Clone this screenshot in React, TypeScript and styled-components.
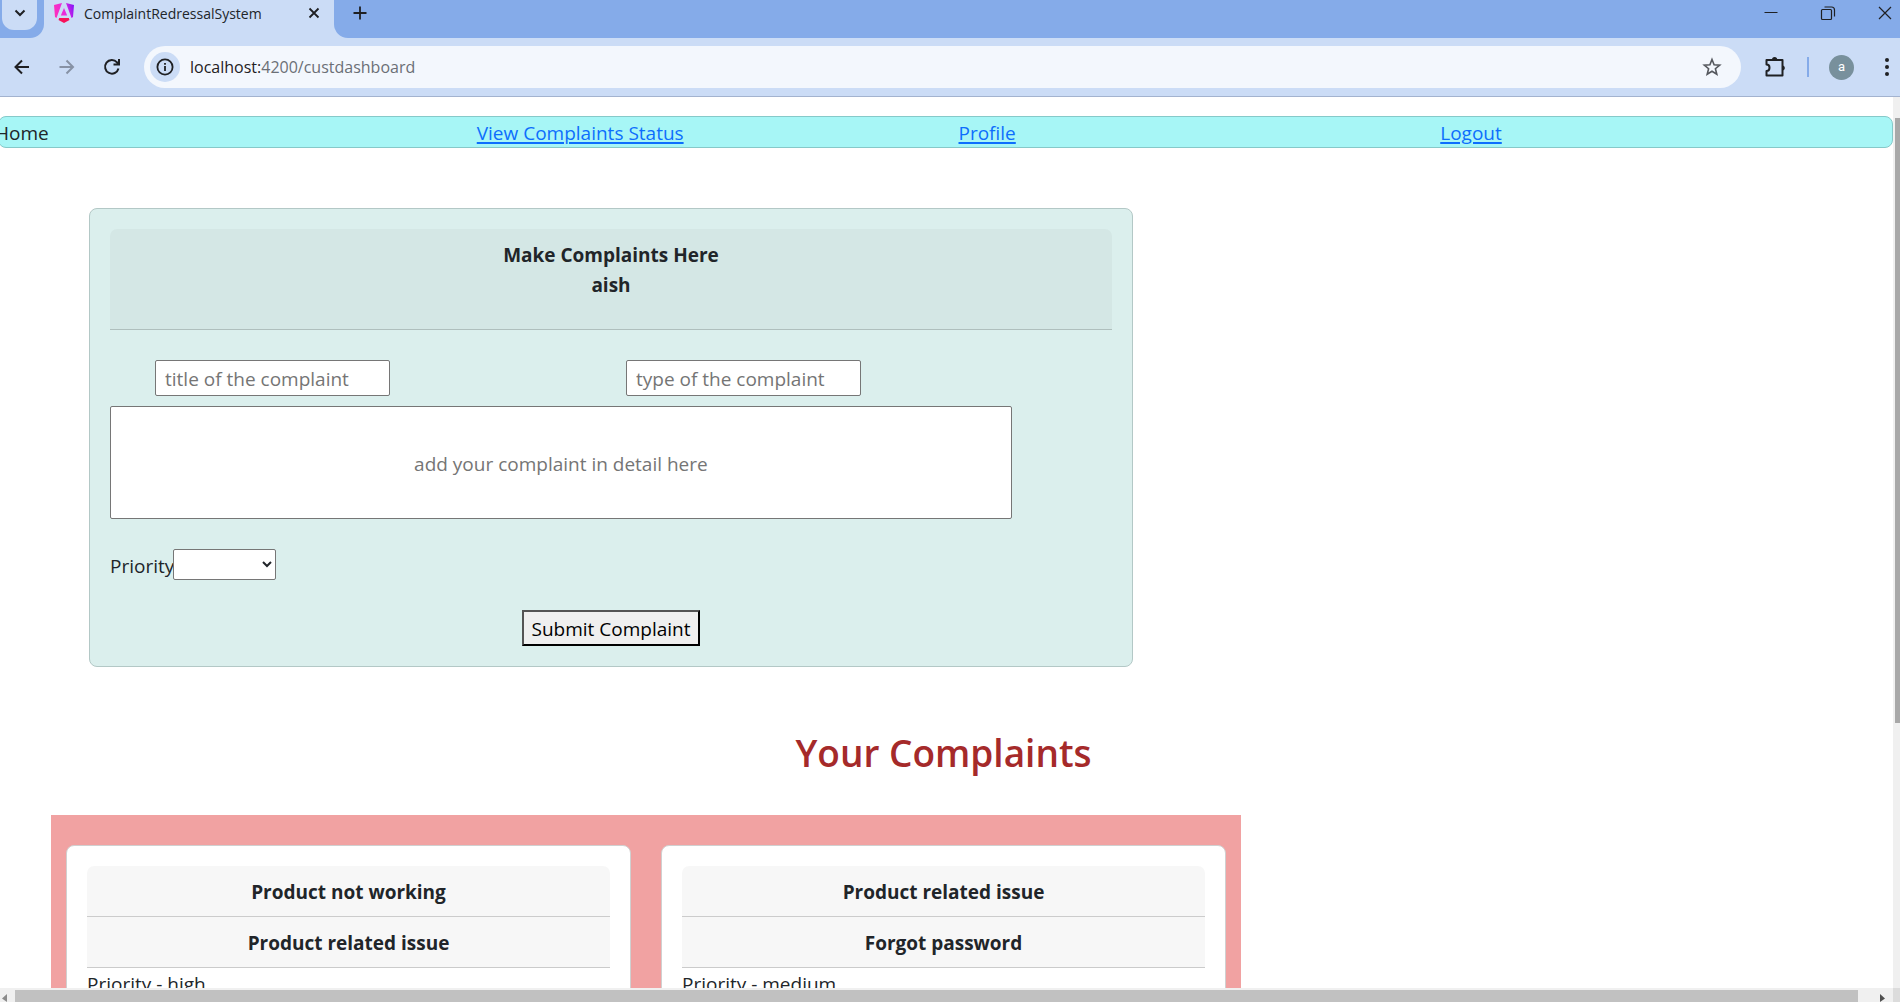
import React from "react";
import styled, { createGlobalStyle } from "styled-components";

const GlobalStyle = createGlobalStyle`
  *, *::before, *::after { box-sizing: border-box; }
  body {
    margin: 0;
    overflow: hidden;
    background: #fff;
    color: #212529;
    font-family: "Open Sans", "Noto Sans", sans-serif;
    font-size: 19px;
    line-height: 30px;
  }
  input, select, button { font: inherit; color: inherit; }
`;

const Window = styled.div`
  display: flex;
  flex-direction: column;
  height: 100vh;
  overflow: hidden;
`;

const TabStrip = styled.header`
  display: flex;
  flex: none;
  height: 38px;
  background: #85abe9;
`;

const ChromeButton = styled.button`
  display: flex;
  align-items: center;
  justify-content: center;
  flex: none;
  width: ${(p: { $width?: number }) => p.$width ?? 34}px;
  height: 34px;
  padding: 0;
  border: 0;
  background: none;
  color: #1f2023;
`;

const TabSearchSlot = styled.div`
  flex: none;
  width: 44px;
  padding-left: 2px;
  background: #85abe9;
  border-radius: 0 0 14px 0;
`;

const TabSearchButton = styled(ChromeButton)`
  width: 35px;
  height: 30px;
  padding-bottom: 4px;
  border-radius: 0 0 12px 12px;
  background: #cbdcf6;
`;

const TabBackdrop = styled.div`
  display: flex;
  flex: none;
  background: #cbdcf6;
`;

const Tab = styled.div`
  display: flex;
  align-items: center;
  flex: none;
  width: 290px;
  padding: 0 10px 12px;
  background: #cbdcf6;
  font-size: 14px;
  line-height: 20px;
`;

const TabTitle = styled.span`
  flex: 1;
  padding: 2px 0 0 10px;
`;

const StripRest = styled.div`
  display: flex;
  align-items: center;
  flex: 1;
  padding-bottom: 12px;
  padding-left: 9px;
  background: #85abe9;
  border-radius: 0 0 0 14px;
`;

const TabTail = styled.div`
  display: flex;
  flex: 1;
  background: #cbdcf6;
`;

const WindowControls = styled.div`
  display: flex;
  align-items: center;
  gap: 23px;
  margin-left: auto;
  margin-right: -2px;
`;

const Toolbar = styled.div`
  display: flex;
  align-items: center;
  flex: none;
  height: 59px;
  padding-left: 5px;
  background: #cbdcf6;
  border-bottom: 1px solid #a3b3cf;
`;

const NavButtons = styled.div`
  display: flex;
  gap: 11px;
  width: 139px;
`;

const AddressBar = styled.div`
  display: flex;
  align-items: center;
  flex: 1;
  height: 42px;
  padding: 0 12px 0 6px;
  border-radius: 21px;
  background: #f3f7fd;
`;

const SiteInfo = styled(ChromeButton)`
  width: 30px;
  height: 30px;
  border-radius: 50%;
  background: #cbdcf6;
`;

const AddressText = styled.span`
  flex: 1;
  padding-left: 10px;
  font-size: 16px;
  line-height: 24px;
  color: #6b6f76;
`;

const Host = styled.span`
  color: #1f2023;
`;

const ToolbarActions = styled.div`
  display: flex;
  align-items: center;
  width: 159px;
  padding-left: 17px;
`;

const Divider = styled.span`
  width: 2px;
  height: 20px;
  margin: 0 20px 0 15px;
  background: #85abe9;
`;

const Avatar = styled.button`
  flex: none;
  width: 25px;
  height: 25px;
  padding: 0;
  border: 0;
  border-radius: 50%;
  background: #78909c;
  color: #fff;
  font-family: Roboto, sans-serif;
  font-size: 13px;
  line-height: 24px;
`;

const MenuButton = styled(ChromeButton)`
  width: 26px;
  margin-left: auto;
`;

const Viewport = styled.div`
  display: grid;
  flex: 1;
  min-height: 0;
  grid-template: minmax(0, 1fr) 14px / minmax(0, 1fr) 7px;
`;

const Page = styled.div`
  overflow: hidden;
  padding-top: 19px;
`;

const NavCard = styled.nav`
  margin-left: -2px;
  border: 1px solid #86c9c9;
  border-radius: 8px;
  background: #a7f6f6;
`;

const NavRow = styled.div`
  display: grid;
  grid-template-columns: repeat(4, 1fr);
  margin: 0 -30px 0 -4px;
  padding-top: 2px;
  line-height: 28px;
`;

const NavLink = styled.a`
  color: #0d6efd;
  text-decoration: underline;
  text-decoration-thickness: 2px;
  text-underline-offset: 2px;
`;

const Card = styled.section`
  padding: 20px;
  border: 1px solid ${(p: { $tinted?: boolean }) => (p.$tinted ? "#b3c8c6" : "#d0d0d0")};
  border-radius: 8px;
  background: ${(p: { $tinted?: boolean }) => (p.$tinted ? "#dbefed" : "#fff")};
`;

const FormCard = styled(Card)`
  max-width: 1044px;
  margin: 60px 0 0 89px;
`;

const CardHeader = styled.div`
  padding: 11px 20px 9px;
  border-bottom: 1px solid rgba(0, 0, 0, 0.176);
  background: rgba(0, 0, 0, 0.03);
  font-weight: 700;
  text-align: center;
  &:first-child { border-radius: 7px 7px 0 0; }
`;

const FormHeader = styled(CardHeader)`
  padding-bottom: 29px;
  p { margin: 0; }
`;

const CardText = styled.p`
  margin: 0;
  padding-top: 1px;
`;

const FieldRow = styled.div`
  display: grid;
  grid-template-columns: 471px 1fr;
  margin-top: 30px;
  padding-left: 45px;
`;

const TextField = styled.input`
  width: ${(p: { $wide?: boolean }) => (p.$wide ? "90%" : "235px")};
  height: ${(p: { $wide?: boolean }) => (p.$wide ? 113 : 36)}px;
  padding: 3px 9px 1px;
  border: 1px solid #767676;
  border-radius: 2px;
  background: #fff;
  text-align: ${(p: { $wide?: boolean }) => (p.$wide ? "center" : "left")};
  &::placeholder { color: #757575; opacity: 1; }
`;

const DetailRow = styled.div`
  display: flex;
  margin-top: 10px;
`;

const PriorityRow = styled.div`
  display: flex;
  align-items: center;
  margin-top: 30px;
`;

const PriorityLabel = styled.label`
  flex: none;
  width: 63px;
  padding-top: 2px;
  line-height: 28px;
`;

const PrioritySelect = styled.select`
  width: 103px;
  height: 31px;
  border: 1px solid #767676;
  border-radius: 2px;
  background: #fff;
`;

const SubmitRow = styled.div`
  display: flex;
  justify-content: center;
  margin-top: 30px;
`;

const SubmitButton = styled.button`
  height: 36px;
  padding: 2px 8px 0;
  border: 2px outset #000;
  background: #efefef;
  color: #000;
`;

const Heading = styled.h1`
  margin: 60px 6px 37px 0;
  color: #a52a2a;
  font-size: 37px;
  font-weight: 600;
  line-height: 51px;
  text-align: center;
`;

const ComplaintPanel = styled.div`
  display: grid;
  grid-template-columns: 1fr 1fr;
  gap: 30px;
  max-width: 1190px;
  margin-left: 51px;
  padding: 30px 15px;
  background: #f1a2a2;
`;

const Track = styled.div`
  display: flex;
  flex-direction: ${(p: { $vertical?: boolean }) => (p.$vertical ? "column" : "row")};
  align-items: stretch;
  padding: ${(p: { $vertical?: boolean }) => (p.$vertical ? "21px 0 0 2px" : "2px 0 0 0")};
  background: #f0f0f0;
`;

const Thumb = styled.div`
  flex: ${(p: { $vertical?: boolean }) => (p.$vertical ? "0 0 69.5%" : "1")};
  background: ${(p: { $vertical?: boolean }) => (p.$vertical ? "#a8a8a8" : "#c1c1c1")};
`;

const ArrowSlot = styled.div`
  flex: none;
  width: ${(p: { $width: number }) => p.$width}px;
  svg { display: block; }
`;

const Corner = styled.div`
  background: #dcdcdc;
`;

const complaints = [
  { title: "Product not working", type: "Product related issue", priority: "high" },
  { title: "Product related issue", type: "Forgot password", priority: "medium" },
];

function Icon({ d, size = 20, width = 2, color = "currentColor" }: { d: string; size?: number; width?: number; color?: string }) {
  return (
    <svg width={size} height={size} viewBox="0 0 20 20" fill="none" stroke={color} strokeWidth={width} aria-hidden="true">
      <path d={d} />
    </svg>
  );
}

function AngularLogo() {
  return (
    <svg width="20" height="20" viewBox="0 0 20 20" aria-hidden="true">
      <defs>
        <linearGradient id="shield" x1="0" y1="0.2" x2="1" y2="0">
          <stop offset="0" stopColor="#fb2fc0" />
          <stop offset="0.5" stopColor="#e52ae0" />
          <stop offset="1" stopColor="#7a12fa" />
        </linearGradient>
      </defs>
      <path fill="url(#shield)" d="M8 0 0 2l1 12 1.500 1L8 0Zm4 0 8 2-1 12-1.500 1L12 0ZM10 5l3.200 7.500H6.800L10 5Z" />
      <path fill="#f8115a" d="M5.200 15h9.600l.7 2L10 20l-5.500-3 .7-2Z" />
    </svg>
  );
}

function BrowserChrome() {
  return (
    <>
      <TabStrip>
        <TabBackdrop>
          <TabSearchSlot>
            <TabSearchButton aria-label="Search tabs"><Icon d="m5.500 7.500 4.500 4.500 4.500-4.500" /></TabSearchButton>
          </TabSearchSlot>
        </TabBackdrop>
        <Tab>
          <AngularLogo />
          <TabTitle>ComplaintRedressalSystem</TabTitle>
          <ChromeButton $width={20} aria-label="Close tab"><Icon d="m5.500 5.500 9 9m0-9-9 9" width={1.8} /></ChromeButton>
        </Tab>
        <TabTail>
          <StripRest>
            <ChromeButton aria-label="New tab"><Icon d="M10 3.500v13M3.500 10h13" width={1.8} /></ChromeButton>
            <WindowControls>
              <ChromeButton aria-label="Minimize"><Icon d="M3.500 9.500h13" width={1} /></ChromeButton>
              <ChromeButton aria-label="Restore"><Icon d="M3.500 7.500q0-1 1-1h8q1 0 1 1v8q0 1-1 1h-8q-1 0-1-1ZM6.500 4h7q3 0 3 3v6.500" width={1.2} /></ChromeButton>
              <ChromeButton aria-label="Close"><Icon d="m4 4 12 12m0-12L4 16" width={1.2} /></ChromeButton>
            </WindowControls>
          </StripRest>
        </TabTail>
      </TabStrip>
      <Toolbar>
        <NavButtons>
          <ChromeButton aria-label="Back"><Icon d="M17 10H3.500m6.500-6.500L3.500 10l6.500 6.500" /></ChromeButton>
          <ChromeButton aria-label="Forward"><Icon d="M2.500 10H16M9.500 3.500 16 10l-6.500 6.500" color="#8792a5" /></ChromeButton>
          <ChromeButton aria-label="Reload"><Icon d="M16.500 11.500A6.800 6.800 0 1 1 15 5.300l2 2M17 2v5.500h-5.500" /></ChromeButton>
        </NavButtons>
        <AddressBar>
          <SiteInfo aria-label="Site information">
            <svg width="20" height="20" viewBox="0 0 20 20" fill="none" stroke="currentColor" strokeWidth="1.800" aria-hidden="true">
              <circle cx="10" cy="10" r="7.600" />
              <path d="M10 9v5M10 6v1.800" />
            </svg>
          </SiteInfo>
          <AddressText><Host>localhost:</Host>4200/custdashboard</AddressText>
          <ChromeButton aria-label="Bookmark this page">
            <Icon d="m10 2.500 2.100 5.200 5.600.4-4.300 3.600 1.400 5.500-4.800-3-4.800 3 1.400-5.500-4.300-3.600 5.600-.4Z" width={1.6} color="#55585e" />
          </ChromeButton>
        </AddressBar>
        <ToolbarActions>
          <ChromeButton aria-label="Extensions">
            <svg width="22" height="22" viewBox="0 0 22 22" fill="none" stroke="currentColor" strokeWidth="2" aria-hidden="true">
              <path d="M2.500 4h16v15.500h-16V15q3 0 3-3.200t-3-3.200Z" strokeLinejoin="round" />
              <path d="M8 3.500a2.600 2.600 0 0 1 5.200 0Zm11 6a2.600 2.600 0 0 1 0 5Z" fill="currentColor" stroke="none" />
            </svg>
          </ChromeButton>
          <Divider />
          <Avatar aria-label="Profile a">a</Avatar>
          <MenuButton aria-label="Browser menu">
            <svg width="6" height="20" viewBox="0 0 6 20" fill="currentColor" aria-hidden="true">
              <circle cx="3" cy="3" r="2" /><circle cx="3" cy="10" r="2" /><circle cx="3" cy="17" r="2" />
            </svg>
          </MenuButton>
        </ToolbarActions>
      </Toolbar>
    </>
  );
}

function ComplaintForm() {
  return (
    <FormCard $tinted>
      <FormHeader>
        <p>Make Complaints Here</p>
        <p>aish</p>
      </FormHeader>
      <form onSubmit={(e) => e.preventDefault()}>
        <FieldRow>
          <TextField aria-label="Title" placeholder="title of the complaint" />
          <TextField aria-label="Type" placeholder="type of the complaint" />
        </FieldRow>
        <DetailRow>
          <TextField $wide aria-label="Detail" placeholder="add your complaint in detail here" />
        </DetailRow>
        <PriorityRow>
          <PriorityLabel htmlFor="priority">Priority</PriorityLabel>
          <PrioritySelect id="priority" defaultValue="">
            <option value=""></option>
            <option value="high">high</option>
            <option value="medium">medium</option>
          </PrioritySelect>
        </PriorityRow>
        <SubmitRow>
          <SubmitButton type="submit">Submit Complaint</SubmitButton>
        </SubmitRow>
      </form>
    </FormCard>
  );
}

export default function App() {
  return (
    <Window>
      <GlobalStyle />
      <BrowserChrome />
      <Viewport>
        <Page>
          <NavCard>
            <NavRow>
              <span>Home</span>
              <span><NavLink href="#status">View Complaints Status</NavLink></span>
              <span><NavLink href="#profile">Profile</NavLink></span>
              <span><NavLink href="#logout">Logout</NavLink></span>
            </NavRow>
          </NavCard>
          <ComplaintForm />
          <Heading>Your Complaints</Heading>
          <ComplaintPanel>
            {complaints.map((c) => (
              <Card key={c.title}>
                <CardHeader>{c.title}</CardHeader>
                <CardHeader>{c.type}</CardHeader>
                <CardText>Priority - {c.priority}</CardText>
              </Card>
            ))}
          </ComplaintPanel>
        </Page>
        <Track $vertical><Thumb $vertical /></Track>
        <Track>
          <ArrowSlot $width={15}>
            <svg width="15" height="12" viewBox="0 0 15 12" fill="#8b8b8b" aria-hidden="true"><path d="M7 4v8L2 8.500Z" /></svg>
          </ArrowSlot>
          <Thumb />
          <ArrowSlot $width={35}>
            <svg width="35" height="12" viewBox="0 0 35 12" fill="#505050" aria-hidden="true"><path d="M22 4v8l5-3.500Z" /></svg>
          </ArrowSlot>
        </Track>
        <Corner />
      </Viewport>
    </Window>
  );
}
